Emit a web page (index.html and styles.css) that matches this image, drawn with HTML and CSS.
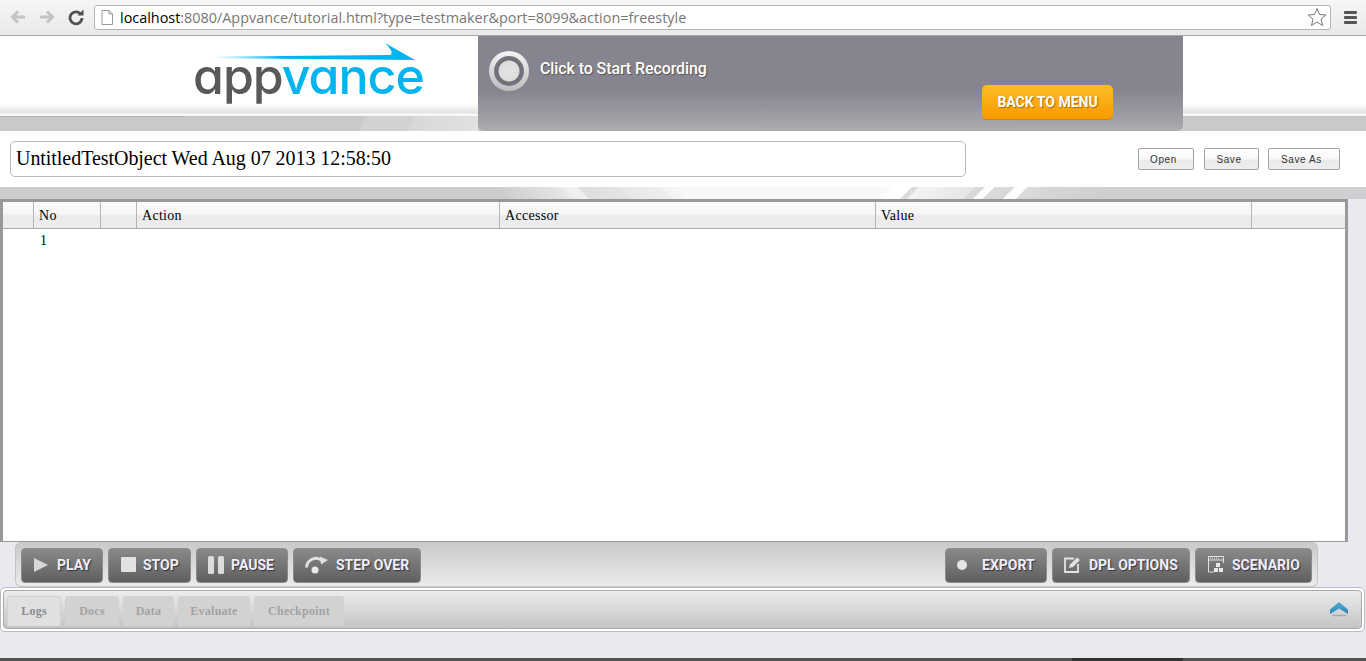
FILE: index.html
```html
<!DOCTYPE html>
<html lang="en">
  <head>
    <meta charset="UTF-8">
    <title>Appvance</title>
    <link rel="stylesheet" href="styles.css">
  </head>
  <body>
    <!-- browser bar -->
    <div class="chrome">
      <svg class="nav-icon" viewBox="0 0 18 18"><path d="M16 9H4M9 3.500L3.500 9L9 14.500" fill="none" stroke="#c4c4c4" stroke-width="3"/></svg>
      <svg class="nav-icon" viewBox="0 0 18 18"><path d="M2 9h12M9 3.500L14.500 9L9 14.500" fill="none" stroke="#c4c4c4" stroke-width="3"/></svg>
      <svg class="nav-icon" viewBox="0 0 18 18"><path d="M14 6.500A6 6 0 1 0 15 10" fill="none" stroke="#505050" stroke-width="2.800"/><path d="M10.500 7.500H16.500V1.500Z" fill="#505050"/></svg>
      <div class="address">
        <svg class="page-icon" viewBox="0 0 12 15"><path d="M1 .5H8L11.500 4V14.500H1Z M8 .5V4H11.500" fill="#fff" stroke="#999"/></svg>
        <span class="host">localhost</span><span class="url-rest">:8080/Appvance/tutorial.html?type=testmaker&amp;port=8099&amp;action=freestyle</span>
        <svg class="star" viewBox="0 0 20 20"><path d="M10 1.500L12.500 7.500L18.800 8L14 12.200L15.500 18.500L10 15.100L4.500 18.500L6 12.200L1.200 8L7.500 7.500Z" fill="#fff" stroke="#777"/></svg>
      </div>
      <div class="menu-icon"><i></i><i></i><i></i></div>
    </div>

    <!-- header with logo and recording panel -->
    <header class="top">
      <div class="top-side top-left">
        <div class="logo">
          <svg class="logo-arrow" viewBox="0 0 204 18"><defs><linearGradient id="arrowFade"><stop offset="0" stop-color="#00b4f0" stop-opacity="0"/><stop offset=".35" stop-color="#00b4f0"/></linearGradient></defs><path d="M0 13.500L178 12Q183 10 173 0L203 17L0 15Z" fill="url(#arrowFade)"/></svg>
          <span class="logo-app">app</span><span class="logo-vance">vance</span>
        </div>
      </div>
      <div class="rec-panel">
        <div class="rec-start">
          <span class="rec-ring"><span class="rec-dot"></span></span>
          <span class="rec-label">Click to Start Recording</span>
        </div>
        <button class="btn-back">BACK TO MENU</button>
      </div>
      <div class="top-side top-right"></div>
    </header>

    <div class="name-row">
      <input class="name-input" type="text" value="UntitledTestObject Wed Aug 07 2013 12:58:50">
      <div class="file-btns">
        <button class="btn-file btn-open">Open</button>
        <button class="btn-file btn-save">Save</button>
        <button class="btn-file btn-saveas">Save As</button>
      </div>
    </div>

    <div class="band"></div>

    <div class="grid-wrap">
      <div class="grid">
        <div class="grid-head">
          <div class="cell c-check"></div>
          <div class="cell c-no">No</div>
          <div class="cell c-flag"></div>
          <div class="cell c-action">Action</div>
          <div class="cell c-accessor">Accessor</div>
          <div class="cell c-value">Value</div>
          <div class="cell c-end"></div>
        </div>
        <div class="grid-row">
          <div class="row-cell c-check"></div>
          <div class="row-cell c-no">1</div>
        </div>
      </div>
    </div>

    <div class="toolbar">
      <div class="tool-group">
        <button class="tool tool-play">
          <svg class="tool-icon" width="16" height="16" viewBox="0 0 16 16"><path d="M1 1L15 8L1 15Z" fill="#d8d8d8"/></svg>PLAY</button>
        <button class="tool tool-stop">
          <svg class="tool-icon" width="15" height="15" viewBox="0 0 15 15"><rect width="15" height="15" rx="1" fill="#e2e2e2"/></svg>STOP</button>
        <button class="tool tool-pause">
          <svg class="tool-icon" width="16" height="18" viewBox="0 0 16 18"><rect width="6" height="18" rx="1.500" fill="#dcdcdc"/><rect x="10" width="6" height="18" rx="1.500" fill="#dcdcdc"/></svg>PAUSE</button>
        <button class="tool tool-step">
          <svg class="tool-icon" width="24" height="18" viewBox="0 0 24 18"><path d="M1.500 11.500A9.500 9.500 0 0 1 17 4.500" fill="none" stroke="#e2e2e2" stroke-width="2.800"/><path d="M15 .5L23 4L16 8.500Z" fill="#e2e2e2"/><circle cx="10" cy="14" r="3.500" fill="#e8e8e8"/></svg>STEP OVER</button>
      </div>
      <div class="tool-group">
        <button class="tool tool-export">
          <svg class="tool-icon" width="10" height="10" viewBox="0 0 10 10"><circle cx="5" cy="5" r="5" fill="#e6e6e6"/></svg>EXPORT</button>
        <button class="tool tool-dpl">
          <svg class="tool-icon" width="18" height="17" viewBox="0 0 18 17"><path d="M10 2.500H1V16H14V8" fill="none" stroke="#e2e2e2" stroke-width="1.800"/><path d="M5 12L6 8.500L13 1.500L16 4L9 11Z" fill="#e2e2e2"/></svg>DPL OPTIONS</button>
        <button class="tool tool-scenario">
          <svg class="tool-icon" width="16" height="17" viewBox="0 0 16 17"><path d="M6 16H.5V.5H15.500V7" fill="none" stroke="#e2e2e2"/><path d="M.5 4H15.500" stroke="#e2e2e2"/><path d="M2 2.200H12" stroke="#e2e2e2" stroke-dasharray="1 1"/><rect x="8" y="7" width="4" height="4" fill="#e8e8e8"/><rect x="6" y="12" width="4" height="4" fill="#e8e8e8"/><rect x="11" y="12" width="4" height="4" fill="#e8e8e8"/></svg>SCENARIO</button>
      </div>
    </div>

    <div class="tabs-outer">
      <div class="tabs-bar">
        <div class="tab-list">
          <span class="tab tab-logs tab-active">Logs</span>
          <span class="tab tab-docs">Docs</span>
          <span class="tab tab-data">Data</span>
          <span class="tab tab-eval">Evaluate</span>
          <span class="tab tab-check">Checkpoint</span>
        </div>
        <svg class="collapse" width="18" height="17" viewBox="0 0 18 17"><defs><linearGradient id="upFade" x2="0" y2="1"><stop offset="0" stop-color="#55acd6"/><stop offset="1" stop-color="#2a86b4"/></linearGradient></defs><path d="M0 9.500L9 2L18 9.500V14L9 8.500L0 14Z" fill="url(#upFade)"/><path d="M2 15.500H16" stroke="#a8a8a8" stroke-width="1.500"/></svg>
      </div>
    </div>

    <div class="page-foot"></div>
  </body>
</html>
```

FILE: styles.css
```css
* {
  box-sizing: border-box;
}

html,
body {
  margin: 0;
  height: 661px;
  overflow: hidden;
}

body {
  display: flex;
  flex-direction: column;
  background-color: #e9eaef;
  font-family: "Liberation Serif", serif;
  color: #000;
}

button {
  padding: 0;
  cursor: pointer;
}

/* browser bar */
.chrome {
  height: 36px;
  display: flex;
  align-items: center;
  padding: 0 9px 1px 9px;
  background: linear-gradient(#f6f6f6, #e9e9e9);
  border-bottom: 1px solid #a6a6a6;
}

.nav-icon {
  width: 18px;
  height: 18px;
  margin-right: 11px;
  flex: none;
}

.address {
  width: 1237px;
  height: 25px;
  margin-left: -2px;
  display: flex;
  align-items: center;
  padding: 0 3px 0 6px;
  background-color: #fff;
  border: 1px solid #b4b4b4;
  border-radius: 3px;
  font-family: "Open Sans", sans-serif;
  font-size: 14.400px;
}

.page-icon {
  width: 12px;
  height: 15px;
  margin-right: 7px;
}

.host {
  color: #000;
}

.url-rest {
  color: #777;
}

.star {
  width: 20px;
  height: 20px;
  margin-left: auto;
}

.menu-icon {
  margin-left: 13px;
  width: 13px;
  display: flex;
  flex-direction: column;
  gap: 2px;
}

.menu-icon i {
  height: 3px;
  background-color: #555;
  border-radius: 1px;
}

/* header */
.top {
  height: 95px;
  display: flex;
  background-color: #c9c9c9;
}

.top-side {
  background: linear-gradient(#fff 0, #fff 68px, #e3e3e3 77px, #f9f9f9 78px, #f6f6f6 80px) 0 0 / 100% 80px no-repeat, #c9c9c9;
}

.top-left {
  width: 478px;
  padding: 9px 0 0 193px;
  background:
    linear-gradient(#b0b0b0, #b0b0b0) 0 80px / 183px 1px no-repeat,
    linear-gradient(#fff 0, #fff 68px, #e3e3e3 77px, #f9f9f9 78px, #f6f6f6 80px) 0 0 / 100% 80px no-repeat,
    linear-gradient(115deg, #c9c9c9 0, #c9c9c9 75%, #d2d2d2 76%, #d2d2d2 85%, #d8d8d8 86%, #e2e2e2 100%) 0 80px / 100% 15px no-repeat;
}

.top-right {
  flex: 1;
}

.logo {
  position: relative;
  width: 232px;
  height: 60px;
  padding-top: 3px;
  font-family: "Inter", sans-serif;
  font-feature-settings: "cv11";
  font-size: 50px;
  font-weight: 500;
  line-height: 57px;
  letter-spacing: -1px;
  white-space: nowrap;
}

.logo-arrow {
  position: absolute;
  left: 19px;
  top: -2px;
  width: 204px;
  height: 18px;
}

.logo-app {
  color: #58595b;
}

.logo-vance {
  color: #00b4f0;
}

.rec-panel {
  width: 705px;
  padding: 15px 0 0 11px;
  display: flex;
  flex-direction: column;
  background: linear-gradient(#86858f 0, #86858f 54px, #acabb0 95px);
  border-radius: 0 0 6px 6px;
}

.rec-start {
  display: flex;
  align-items: center;
  gap: 11px;
}

.rec-ring {
  width: 40px;
  height: 40px;
  display: flex;
  align-items: center;
  justify-content: center;
  border-radius: 50%;
  background: linear-gradient(#f4f4f4, #bdbdbd);
}

.rec-dot {
  width: 30px;
  height: 30px;
  display: flex;
  border-radius: 50%;
  background: radial-gradient(circle, #e4e4e4 0, #dcdcdc 10px, #6f6e76 11px, #77767e 15px);
}

.rec-label {
  padding-bottom: 6px;
  font-family: "Roboto", sans-serif;
  font-size: 16px;
  font-weight: 500;
  letter-spacing: -.1px;
  color: #fff;
  text-shadow: 1px 1px 1px #555;
}

.btn-back {
  width: 131px;
  height: 35px;
  margin: -6px 0 0 493px;
  background: linear-gradient(#fdbd28, #f99900);
  border: 0;
  border-bottom: 1px solid #d98200;
  border-radius: 5px;
  font-family: "Roboto", sans-serif;
  font-size: 14px;
  font-weight: 700;
  color: #fff;
  text-shadow: 1px 1px 1px #a86a00;
}

/* test name row */
.name-row {
  height: 56px;
  display: flex;
  align-items: flex-start;
  padding: 10px 26px 0 10px;
  background-color: #fff;
}

.name-input {
  width: 956px;
  height: 36px;
  padding: 0 5px 1px;
  border: 1px solid #bbb;
  border-radius: 5px;
  font-family: "Liberation Serif", serif;
  font-size: 20px;
  letter-spacing: -.05px;
  color: #000;
  background-color: #fff;
}

.file-btns {
  display: flex;
  margin: 7px 0 0 auto;
}

.btn-file {
  height: 22px;
  padding-right: 5px;
  background: linear-gradient(#fff 0, #f8f8f8 50%, #eaeaea 55%, #eee 100%);
  border: 1px solid #a3a3a3;
  border-radius: 2px;
  font-family: "Liberation Sans", sans-serif;
  font-size: 10px;
  letter-spacing: .6px;
  color: #333;
}

.btn-open {
  width: 56px;
  margin-right: 10px;
}

.btn-save {
  width: 55px;
  margin-right: 9px;
}

.btn-saveas {
  width: 72px;
}

/* two sets of diagonal streaks, one leaning each way */
.band {
  height: 12px;
  background:
    linear-gradient(45deg, #cdcdcf 0, #cdcdcf 72.800%, #e4e4e4 81.400%, #f0f0f0 83.200%, #f0f0f0 84.600%, #dedede 85%, #e4e4e4 90.800%, #e8e8e8 91.100%, #ededed 96.500%, #f3f3f3 97.200%, #f8f8f8 100%) 0 0 / 683px 12px no-repeat,
    linear-gradient(135deg, #f8f8f8 0, #f8f8f8 29.200%, #fff 30.600%, #fff 32.800%, #ddd 33%, #ddd 33.900%, #f4f4f4 34%, #e4e4e4 42%, #d9d9d9 42.100%, #d9d9d9 43.400%, #fff 43.500%, #fff 44.800%, #dadada 44.900%, #d8d8d8 47.700%, #fff 47.800%, #fff 49.500%, #dcdcdc 49.600%, #d6d6d6 52.500%, #cfcfd1 61%, #cfcfd1 100%) 100% 0 / 683px 12px no-repeat;
}

/* steps grid */
.grid-wrap {
  height: 343px;
  padding-right: 18px;
  background-color: #e9eaef;
}

.grid {
  height: 100%;
  border: 3px solid #999;
  border-top-width: 3px;
  border-bottom-width: 1px;
  background-color: #fff;
}

.grid-head {
  height: 27px;
  display: flex;
  background: linear-gradient(#fafafa 0, #f6f6f6 45%, #ebebeb 55%, #ededed 100%);
  border-bottom: 1px solid #ababab;
}

.cell {
  padding: 5px 0 0 5px;
  border-right: 1px solid #b5b5b5;
  font-size: 14px;
  line-height: 17px;
  letter-spacing: .3px;
}

.c-check {
  width: 31px;
}

.c-no {
  width: 67px;
}

.c-flag {
  width: 36px;
}

.c-action {
  width: 363px;
}

.c-accessor {
  width: 376px;
}

.c-value {
  width: 376px;
}

.c-end {
  flex: 1;
  border-right: 0;
}

.grid-row {
  display: flex;
  font-size: 14px;
}

.row-cell {
  padding: 3px 0 0 6px;
  line-height: 17px;
}

/* buttons under the grid */
.toolbar {
  height: 45px;
  margin: 0 48px 0 15px;
  display: flex;
  justify-content: space-between;
  padding: 6px 5px 0 5px;
  background: linear-gradient(#c9c9c9, #ebebeb);
  border: 1px solid #c4c4c4;
  border-top: 0;
  border-radius: 6px;
}

.tool-group {
  display: flex;
  gap: 5px;
}

.tool {
  height: 35px;
  display: flex;
  align-items: center;
  padding-bottom: 2px;
  background: linear-gradient(#8a8a8a, #5f5f60);
  border: 1px solid #8c8c8c;
  border-radius: 4px;
  font-family: "Roboto", sans-serif;
  font-size: 14px;
  font-weight: 700;
  color: #eef;
  text-shadow: 1px 1px 1px #333;
  white-space: nowrap;
}

.tool-icon {
  flex: none;
}

.tool-play {
  width: 82px;
  padding-left: 11px;
}

.tool-play .tool-icon {
  margin-right: 8px;
}

.tool-stop {
  width: 83px;
  padding-left: 12px;
}

.tool-stop .tool-icon {
  margin-right: 7px;
}

.tool-pause {
  width: 92px;
  padding-left: 11px;
}

.tool-pause .tool-icon {
  margin-right: 7px;
}

.tool-step {
  width: 128px;
  padding-left: 11px;
}

.tool-step .tool-icon {
  margin-right: 7px;
}

.tool-export {
  width: 102px;
  padding-left: 11px;
}

.tool-export .tool-icon {
  margin-right: 15px;
}

.tool-dpl {
  width: 138px;
  padding-left: 11px;
}

.tool-dpl .tool-icon {
  margin-right: 7px;
}

.tool-scenario {
  width: 117px;
  padding-left: 12px;
}

.tool-scenario .tool-icon {
  margin-right: 8px;
}

/* tabs panel */
.tabs-outer {
  height: 45px;
  padding: 2px;
  background-color: #fff;
  border: 1px solid #bcbcbc;
  border-radius: 5px;
  margin-right: 1px;
}

.tabs-bar {
  height: 39px;
  display: flex;
  align-items: flex-end;
  justify-content: space-between;
  padding: 0 13px 2px 3px;
  background: linear-gradient(#ececec, #c4c4c4);
  border: 1px solid #a9a9a9;
  border-radius: 4px;
}

.tab-list {
  display: flex;
  gap: 4px;
}

.tab {
  height: 30px;
  padding-top: 8px;
  text-align: center;
  background-color: #d2d2d2;
  border-radius: 3px 3px 0 0;
  font-size: 12px;
  font-weight: 700;
  letter-spacing: .25px;
  color: #a3a3a3;
}

.tab-active {
  background-color: #e0e0e0;
  border: 1px solid #d2d2d2;
  border-bottom: 0;
  padding-top: 7px;
  color: #8c8c8c;
}

.tab-logs {
  width: 54px;
}

.tab-docs {
  width: 54px;
}

.tab-data {
  width: 51px;
}

.tab-eval {
  width: 72px;
}

.tab-check {
  width: 90px;
}

.collapse {
  align-self: center;
}

.page-foot {
  flex: 1;
  background:
    linear-gradient(#333, #333) 1072px 100% / 111px 3px no-repeat,
    linear-gradient(#555, #555) 0 100% / 100% 3px no-repeat;
}
```
